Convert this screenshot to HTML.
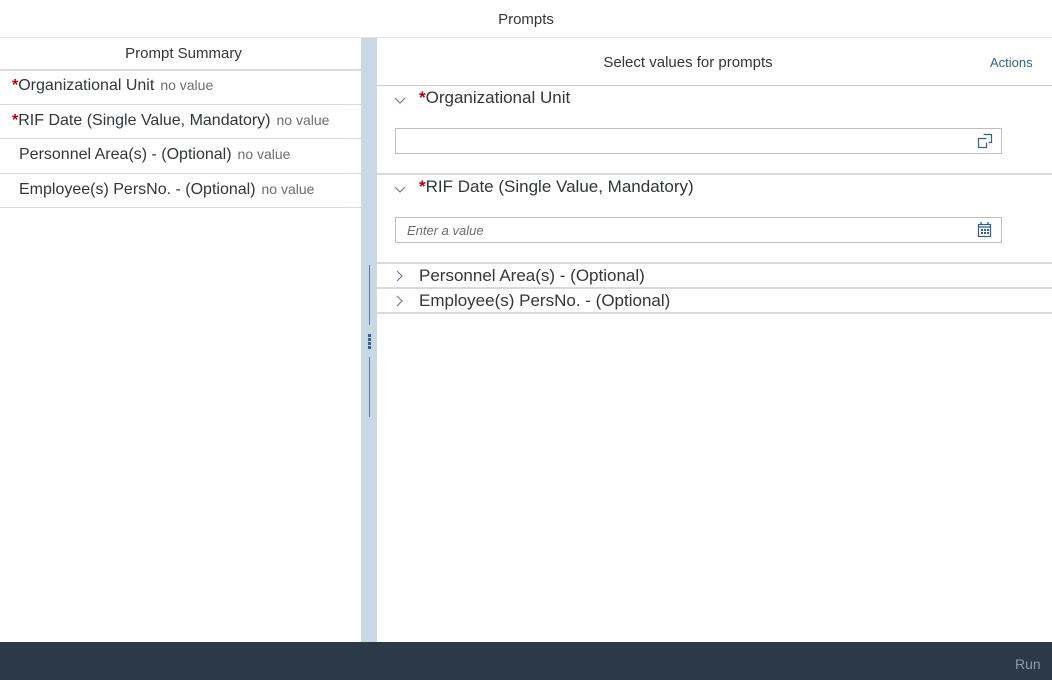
<!DOCTYPE html>
<html><head><style>
*{margin:0;padding:0;box-sizing:border-box}
body{width:1052px;height:680px;overflow:hidden;background:#fff;font-family:"Liberation Sans",Arial,sans-serif;color:#32363a;position:relative}
.a{position:absolute}
.st{color:#bb0000;font-weight:bold}
.nv{font-size:14px;color:#6a6d70;margin-left:6px}
.hl{position:absolute;height:1px;background:#d9d9d9}
.lt{position:absolute;left:12px;font-size:16px;white-space:nowrap}
.in{position:absolute;left:395px;width:607px;height:26px;border:1px solid #bfbfbf;background:#fff}
.rt{position:absolute;left:419px;font-size:17px;white-space:nowrap}
.chev{position:absolute;left:393px}
</style></head><body>
<div class="a" style="left:0;top:2px;width:1052px;height:35px;text-align:center;line-height:36px;font-size:15px;color:#32363a">Prompts</div>
<div class="hl" style="left:0;top:37px;width:1052px;background:#e5e5e5"></div>

<div class="a" style="left:0;top:45px;width:367px;text-align:center;font-size:15px">Prompt Summary</div>
<div class="hl" style="left:0;top:69px;width:361px;height:2px"></div>
<div class="lt" style="top:77px"><span class="st">*</span>Organizational Unit<span class="nv">no value</span></div>
<div class="hl" style="left:0;top:104px;width:361px"></div>
<div class="lt" style="top:112px"><span class="st">*</span>RIF Date (Single Value, Mandatory)<span class="nv">no value</span></div>
<div class="hl" style="left:0;top:138px;width:361px"></div>
<div class="lt" style="top:146px;left:19px">Personnel Area(s) - (Optional)<span class="nv">no value</span></div>
<div class="hl" style="left:0;top:173px;width:361px"></div>
<div class="lt" style="top:181px;left:19px">Employee(s) PersNo. - (Optional)<span class="nv">no value</span></div>
<div class="hl" style="left:0;top:207px;width:361px"></div>

<div class="a" style="left:361px;top:38px;width:16px;height:604px;background:#c9d8e5"></div>
<div class="a" style="left:369px;top:265px;width:1px;height:60px;background:#5b7fa8"></div>
<div class="a" style="left:369px;top:357px;width:1px;height:60px;background:#5b7fa8"></div>
<div class="a" style="left:368px;top:334px;width:3px;height:3px;background:#3a5f8a;box-shadow:0 4px 0 #3a5f8a,0 8px 0 #3a5f8a,0 12px 0 #3a5f8a"></div>

<div class="a" style="left:377px;top:54px;width:622px;text-align:center;font-size:15px">Select values for prompts</div>
<div class="a" style="left:990px;top:55px;font-size:13px;color:#346187">Actions</div>
<div class="hl" style="left:377px;top:85px;width:675px;background:#cfcfcf"></div>

<svg class="chev" style="top:94px" width="14" height="14"><path d="M2 4l5 5 5-5" fill="none" stroke="#6a7f96" stroke-width="1.2"/></svg>
<div class="rt" style="top:88px"><span class="st">*</span>Organizational Unit</div>
<div class="in" style="top:128px"></div>
<svg class="a" style="left:977px;top:133px" width="16" height="16"><path d="M6.5 1.5h8v8h-3M9.5 5.5h-8v9h8v-5" fill="none" stroke="#346187" stroke-width="1.2"/></svg>
<div class="hl" style="left:377px;top:173px;width:675px;height:2px"></div>

<svg class="chev" style="top:183px" width="14" height="14"><path d="M2 4l5 5 5-5" fill="none" stroke="#6a7f96" stroke-width="1.2"/></svg>
<div class="rt" style="top:177px"><span class="st">*</span>RIF Date (Single Value, Mandatory)</div>
<div class="in" style="top:217px"><span style="position:absolute;left:11px;top:5px;font-size:13px;font-style:italic;color:#6a6d70">Enter a value</span></div>
<svg class="a" style="left:977px;top:221px" width="16" height="17"><rect x="1.5" y="3.5" width="12" height="12" fill="none" stroke="#346187" stroke-width="1.2"/><path d="M4 1v3M11 1v3M1.5 6h12" stroke="#346187" stroke-width="1.3"/><g fill="#346187"><rect x="4" y="8" width="2" height="2"/><rect x="7" y="8" width="2" height="2"/><rect x="10" y="8" width="2" height="2"/><rect x="4" y="11" width="2" height="2"/><rect x="7" y="11" width="2" height="2"/><rect x="10" y="11" width="2" height="2"/></g></svg>
<div class="hl" style="left:377px;top:262px;width:675px;height:2px"></div>

<svg class="chev" style="top:269px" width="14" height="14"><path d="M4 2l5 5-5 5" fill="none" stroke="#6a7f96" stroke-width="1.2"/></svg>
<div class="rt" style="top:266px">Personnel Area(s) - (Optional)</div>
<div class="hl" style="left:377px;top:287px;width:675px;height:2px"></div>
<svg class="chev" style="top:294px" width="14" height="14"><path d="M4 2l5 5-5 5" fill="none" stroke="#6a7f96" stroke-width="1.2"/></svg>
<div class="rt" style="top:291px">Employee(s) PersNo. - (Optional)</div>
<div class="hl" style="left:377px;top:312px;width:675px;height:2px"></div>

<div class="a" style="left:0;top:642px;width:1052px;height:38px;background:#2c3a47"></div>
<div class="a" style="left:1015px;top:656px;font-size:14px;color:#8c99a6">Run</div>
</body></html>
